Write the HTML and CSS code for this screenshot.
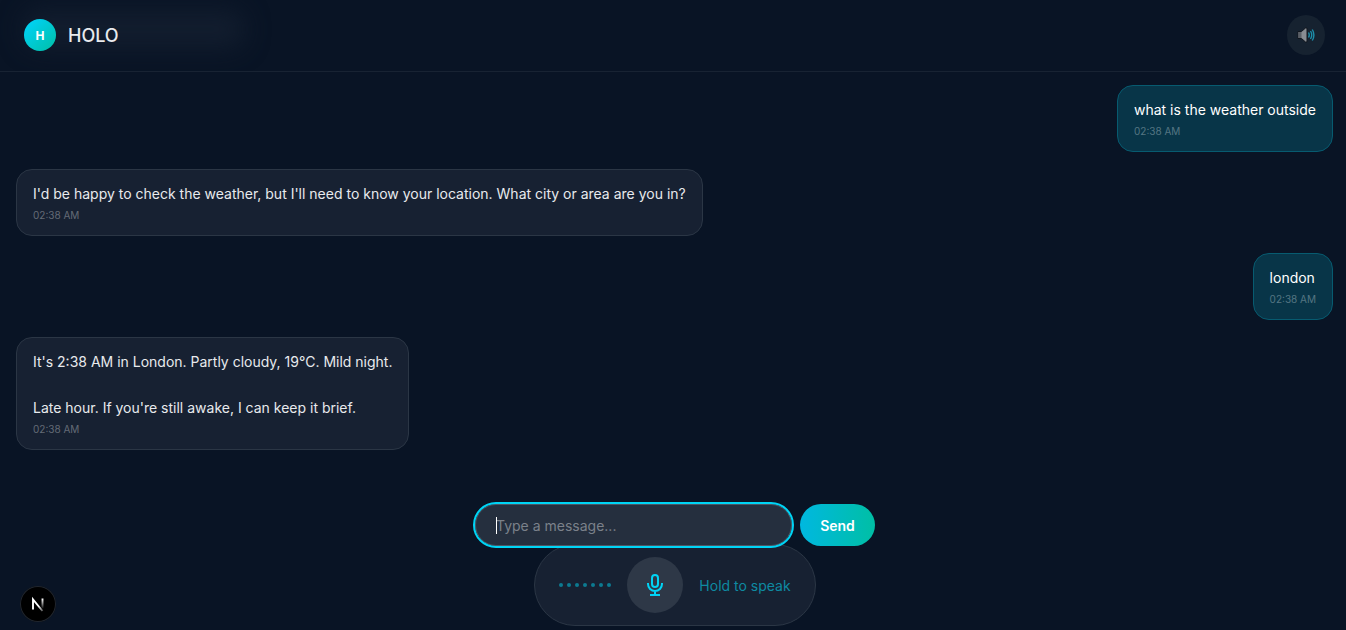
FILE: index.html
```html
<!DOCTYPE html>
<html lang="en">
<head>
<meta charset="utf-8">
<meta name="viewport" content="width=device-width, initial-scale=1">
<title>HOLO</title>
<link rel="stylesheet" href="styles.css">
</head>
<body>
<header class="header">
  <div class="brand">
    <span class="avatar">H</span>
    <h1 class="name">HOLO</h1>
  </div>
  <button class="sound" type="button" aria-label="Toggle sound">
    <svg width="20" height="18" viewBox="0 0 20 18" fill="none" aria-hidden="true">
      <path d="M2 5.500H5.500L9.500 2H11V16H9.500L5.500 12.500H2Z" fill="#888c92" stroke="#11161e" stroke-width="1"/>
      <path d="M2.500 6H5.500V12H2.500Z" fill="#5a5f66"/>
      <path d="M12.500 6.500Q14 9 12.500 11.500M14.500 5Q17 9 14.500 13M16.300 3.500Q19.500 9 16.300 14.500" stroke="#1d8eaa" stroke-width="1.400"/>
    </svg>
  </button>
</header>
<main class="messages">
  <article class="bubble user">
    <p class="text">what is the weather outside</p>
    <time class="time">02:38 AM</time>
  </article>
  <article class="bubble">
    <p class="text">I'd be happy to check the weather, but I'll need to know your location. What city or area are you in?</p>
    <time class="time">02:38 AM</time>
  </article>
  <article class="bubble user">
    <p class="text">london</p>
    <time class="time">02:38 AM</time>
  </article>
  <article class="bubble">
    <p class="text">It's 2:38 AM in London. Partly cloudy, 19°C. Mild night.

Late hour. If you're still awake, I can keep it brief.</p>
    <time class="time">02:38 AM</time>
  </article>
</main>
<footer class="dock">
  <form class="composer">
    <div class="field">
      <input class="input" type="text" placeholder="Type a message..." aria-label="Message">
      <span class="caret"></span>
    </div>
    <button class="send" type="submit">Send</button>
  </form>
  <div class="voice">
    <div class="wave"><i class="dot"></i><i class="dot"></i><i class="dot"></i><i class="dot"></i><i class="dot"></i><i class="dot"></i><i class="dot"></i></div>
    <button class="mic" type="button" aria-label="Hold to speak">
      <svg width="24" height="24" viewBox="0 0 24 24" fill="none" stroke="#00d4f5" stroke-width="2" stroke-linecap="square" aria-hidden="true">
        <rect x="9" y="2" width="6" height="12" rx="3"/>
        <path d="M5 11a7 7 0 0 0 14 0M12 18v4M8 22h8"/>
      </svg>
    </button>
    <span class="hint">Hold to speak</span>
  </div>
</footer>
<button class="devtools" type="button" aria-label="Open developer tools">
  <svg width="36" height="36" viewBox="0 0 36 36" fill="none" aria-hidden="true">
    <defs>
      <linearGradient id="stem" x1="0" y1="13" x2="0" y2="23" gradientUnits="userSpaceOnUse"><stop stop-color="#fff"/><stop offset="1" stop-color="#fff" stop-opacity="0"/></linearGradient>
      <linearGradient id="diag" x1="19" y1="20" x2="23" y2="26" gradientUnits="userSpaceOnUse"><stop stop-color="#fff"/><stop offset="1" stop-color="#fff" stop-opacity="0.200"/></linearGradient>
    </defs>
    <path d="M13 23.500V13.500L22.500 25" stroke="url(#diag)" stroke-width="1.900"/>
    <path d="M22.500 12.500V22.500" stroke="url(#stem)" stroke-width="1.900"/>
  </svg>
</button>
</body>
</html>
```
FILE: styles.css
```css
* { box-sizing: border-box; }

body {
  margin: 0;
  height: 100vh;
  display: flex;
  flex-direction: column;
  overflow: hidden;
  background: #091425;
  color: #e8eaed;
  font-family: Inter, "Liberation Sans", sans-serif;
}

button, input { font-family: inherit; }

button {
  padding: 0;
  border: 0;
  display: flex;
  align-items: center;
  justify-content: center;
  cursor: pointer;
}

.header {
  position: relative;
  display: flex;
  align-items: center;
  justify-content: space-between;
  overflow: hidden;
  padding: 15px 21px 16px 24px;
  border-bottom: 1px solid #182333;
}

/* soft glow behind the brand */
.header::before {
  content: "";
  position: absolute;
  left: 24px;
  top: 10px;
  width: 220px;
  height: 38px;
  border-radius: 16px;
  background: #121d2e;
  filter: blur(12px);
}

.brand { position: relative; display: flex; align-items: center; gap: 12px; }

.avatar {
  width: 32px;
  height: 32px;
  display: flex;
  align-items: center;
  justify-content: center;
  border-radius: 50%;
  background: linear-gradient(135deg, #00d4ff, #00bfa5);
  color: #fff;
  font-size: 12px;
  font-weight: 700;
}

.name { margin: 0; font-size: 18px; font-weight: 500; line-height: 25px; }

.sound {
  width: 38px;
  height: 40px;
  border-radius: 50%;
  background: #162230;
}

.messages {
  flex: 1;
  min-height: 0;
  display: flex;
  flex-direction: column;
  align-items: flex-start;
  gap: 17px;
  padding: 13px 13px 0 16px;
}

.bubble {
  max-width: 70%;
  padding: 12px 16px;
  border: 1px solid #2b3645;
  border-radius: 16px;
  background: #172132;
}

.user {
  align-self: flex-end;
  border-color: #075b70;
  background: #083548;
  color: #fff;
}

.text { margin: 0; font-size: 14px; line-height: 23px; white-space: pre-line; }

.time {
  display: block;
  margin-top: 3px;
  font-size: 10px;
  line-height: 15px;
  color: #646b76;
}

.user .time { color: #557683; }

.dock {
  display: flex;
  flex-direction: column;
  align-items: center;
  padding: 0 0 4px 4px;
}

.composer {
  position: relative;
  z-index: 1;
  width: 400px;
  max-width: 100%;
  display: flex;
  gap: 8px;
}

.field { position: relative; flex: 1; }

.input {
  display: block;
  width: 100%;
  height: 42px;
  padding: 0 20px;
  border: 1px solid #4c5663;
  border-radius: 24px;
  outline: 2px solid #00d4f5;
  background: #252f3e;
  color: #fff;
  font-size: 14px;
}

.input::placeholder { color: #7b818a; opacity: 1; }

.caret {
  position: absolute;
  left: 21px;
  top: 13px;
  width: 1px;
  height: 17px;
  background: #fff;
}

.send {
  width: 75px;
  height: 42px;
  border-radius: 24px;
  background: linear-gradient(90deg, #00b8e0, #00bfa5);
  color: #fff;
  font-size: 14px;
  font-weight: 600;
}

.voice {
  display: flex;
  align-items: center;
  gap: 16px;
  margin-top: -2px;
  padding: 12px 24px;
  border: 1px solid #2b3645;
  border-radius: 48px;
  background: #172132;
}

.wave { display: flex; gap: 4px; }

.dot { width: 4px; height: 4px; border-radius: 50%; background: #0c7a91; }

.mic { width: 56px; height: 56px; border-radius: 50%; background: #2e3847; }

.hint { font-size: 14px; color: #0e8aa2; }

.devtools {
  position: fixed;
  left: 20px;
  bottom: 8px;
  width: 36px;
  height: 36px;
  border-radius: 50%;
  background: #000;
  box-shadow: inset 0 0 0 1px #20262f;
}
```
